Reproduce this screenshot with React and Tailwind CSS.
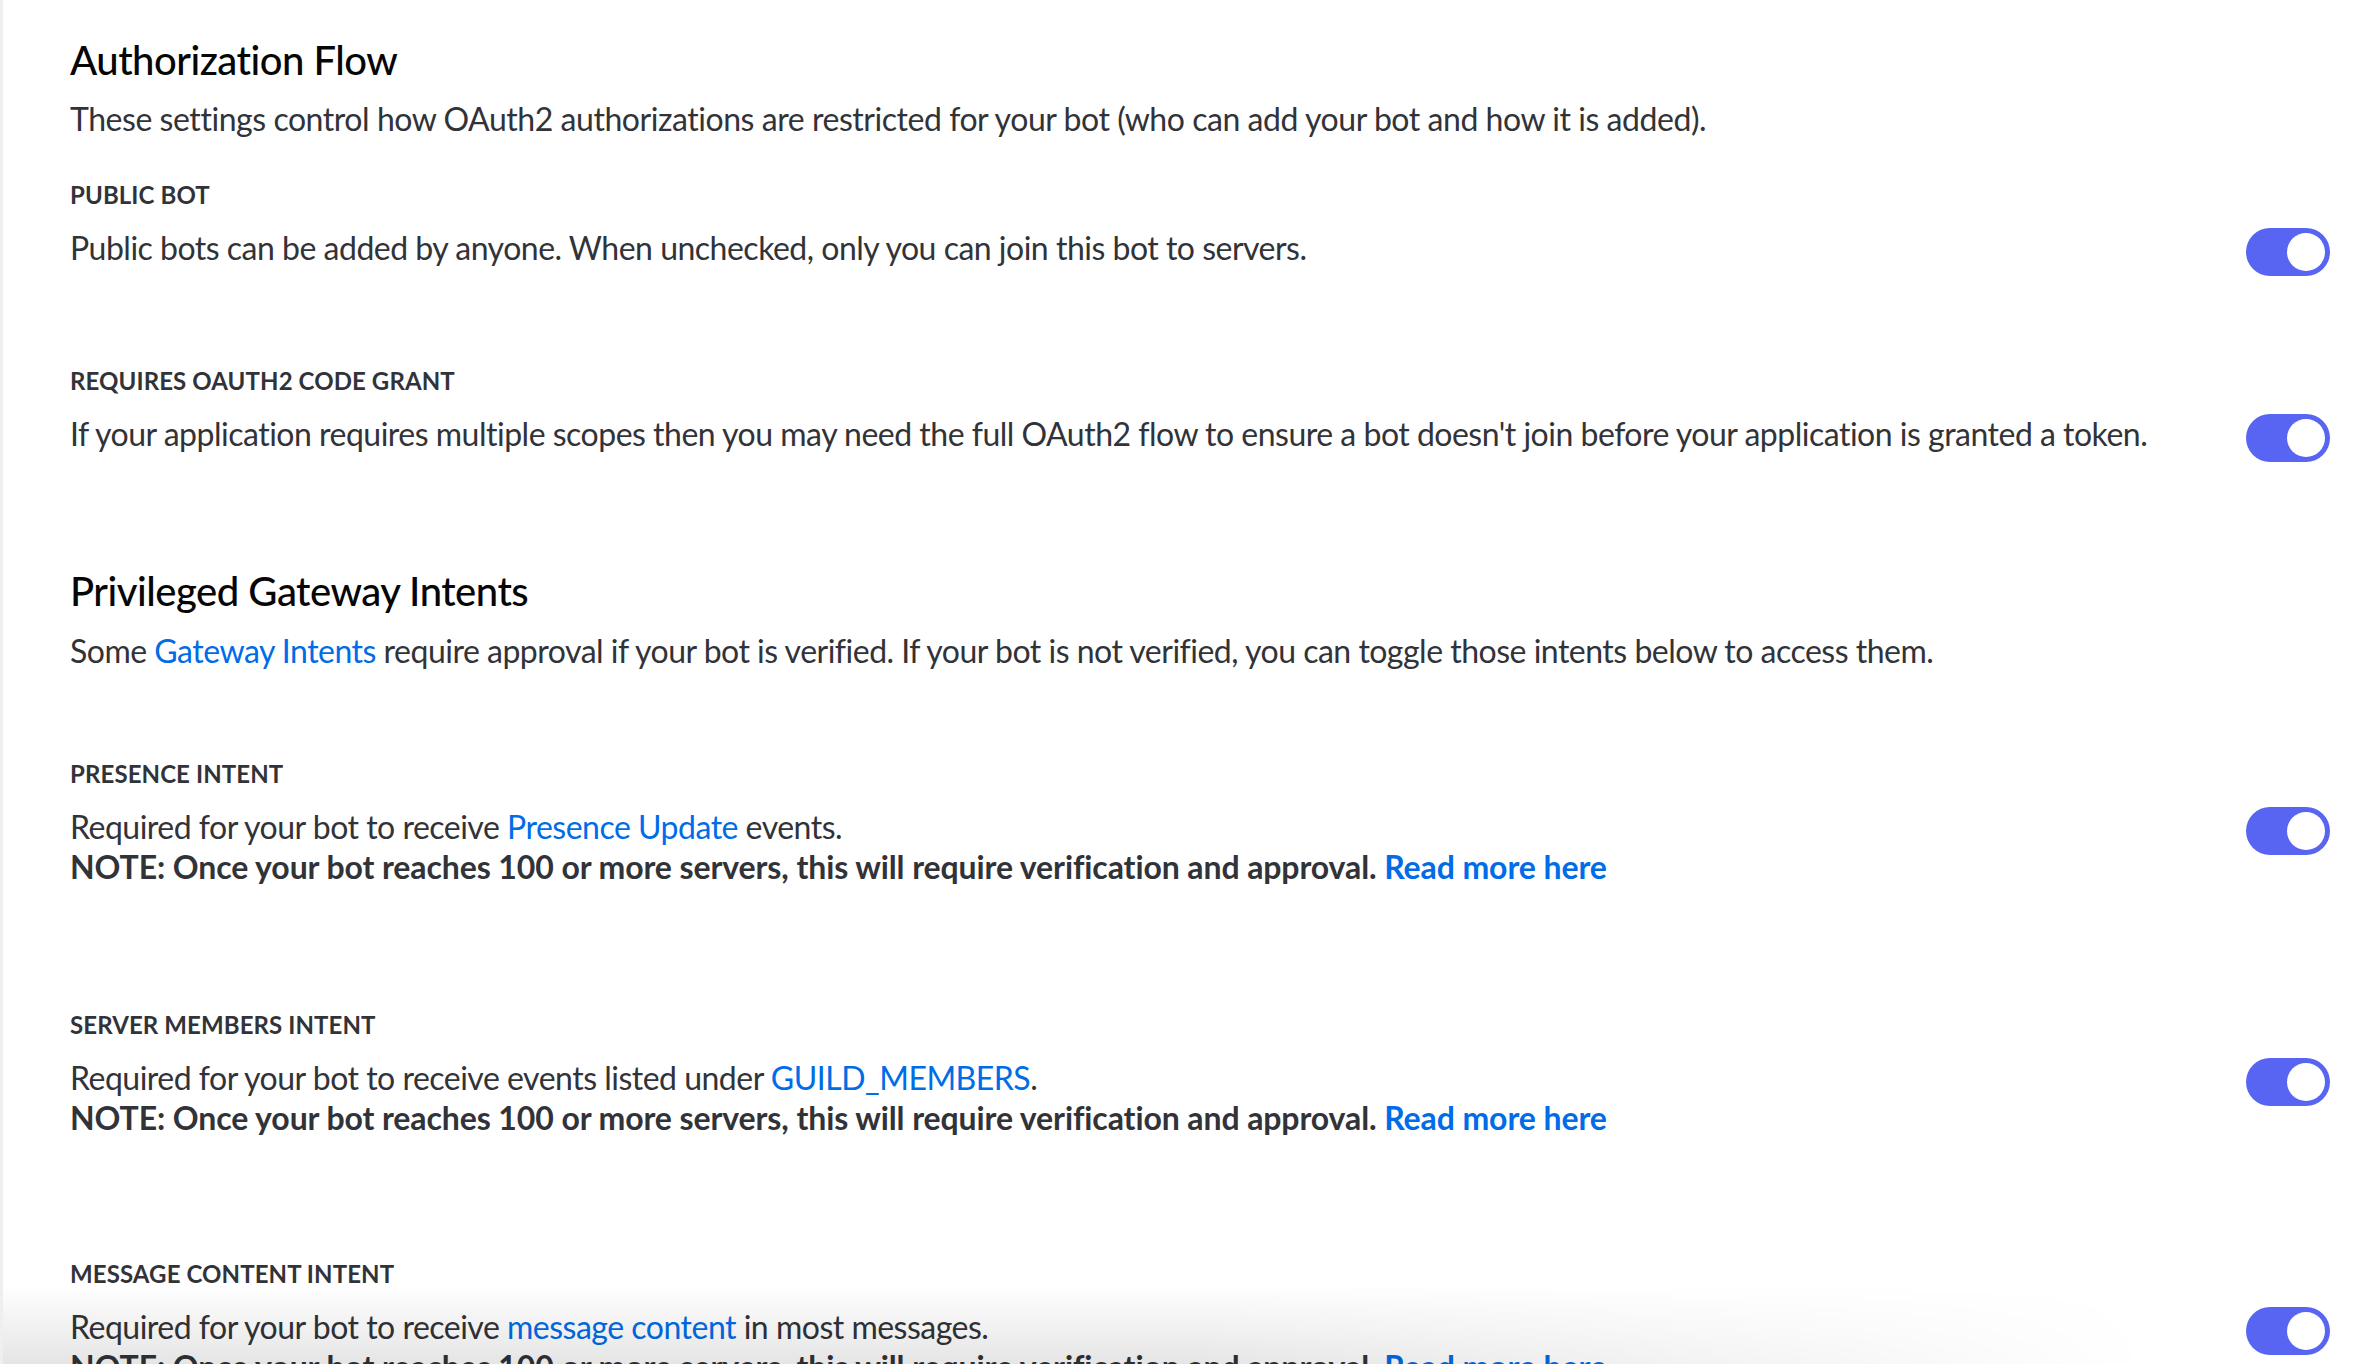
import React from "react";

const FONT = "font-['Lato','Liberation_Sans',Arial,sans-serif]";

function Toggle() {
  return (
    <div className="flex h-[48px] w-[84px] shrink-0 items-center justify-end rounded-full bg-[#5865f2] pr-[5px]">
      <div className="h-[38px] w-[38px] rounded-full bg-white" />
    </div>
  );
}

function Link({ children, bold }) {
  return (
    <a href="#" className={`text-[#006ce7] ${bold ? "font-bold" : ""}`}>
      {children}
    </a>
  );
}

function SettingRow({ label, className = "", children }) {
  return (
    <div className={className}>
      <div className="text-[24px] font-bold uppercase leading-[32px] tracking-[0.1px] text-[#313338]">
        {label}
      </div>
      <div className="mt-[17px] flex items-start justify-between gap-10">
        <div className="text-[32px] leading-[40px] tracking-[-0.5px] text-[#313338]">
          {children}
        </div>
        <Toggle />
      </div>
    </div>
  );
}

function Note() {
  return (
    <div className="font-bold tracking-[-0.1px]">
      NOTE: Once your bot reaches 100 or more servers, this will require verification
      and approval. <Link bold>Read more here</Link>
    </div>
  );
}

export default function App() {
  return (
    <div
      className={`relative h-[1364px] w-full overflow-hidden border-l-[3px] border-[#eeeff1] bg-white ${FONT}`}
    >
      <div className="pl-[67px] pr-[40px] pt-[36px]">
        <h2 className="text-[40px] font-medium leading-[48px] tracking-[-0.5px] text-[#060607]">
          Authorization Flow
        </h2>
        <p className="mt-[15px] text-[32px] leading-[40px] tracking-[-0.45px] text-[#313338]">
          These settings control how OAuth2 authorizations are restricted for your bot
          (who can add your bot and how it is added).
        </p>

        <SettingRow label="Public Bot" className="mt-[40px]">
          Public bots can be added by anyone. When unchecked, only you can join this bot
          to servers.
        </SettingRow>

        <SettingRow label="Requires OAuth2 Code Grant" className="mt-[89px]">
          If your application requires multiple scopes then you may need the full OAuth2
          flow to ensure a bot doesn't join before your application is granted a token.
        </SettingRow>

        <h2 className="mt-[105px] text-[40px] font-medium leading-[48px] tracking-[-0.5px] text-[#060607]">
          Privileged Gateway Intents
        </h2>
        <p className="mt-[16px] text-[32px] leading-[40px] tracking-[-0.5px] text-[#313338]">
          Some <Link>Gateway Intents</Link> require approval if your bot is verified. If
          your bot is not verified, you can toggle those intents below to access them.
        </p>

        <SettingRow label="Presence Intent" className="mt-[87px]">
          <div>
            Required for your bot to receive <Link>Presence Update</Link> events.
          </div>
          <Note />
        </SettingRow>

        <SettingRow label="Server Members Intent" className="mt-[122px]">
          <div>
            Required for your bot to receive events listed under{" "}
            <Link>GUILD_MEMBERS</Link>.
          </div>
          <Note />
        </SettingRow>

        <SettingRow label="Message Content Intent" className="mt-[120px]">
          <div>
            Required for your bot to receive <Link>message content</Link> in most
            messages.
          </div>
          <Note />
        </SettingRow>
      </div>

      <div className="pointer-events-none absolute bottom-0 left-0 h-[80px] w-[2150px] bg-[linear-gradient(to_top,rgba(0,0,0,0.1),rgba(0,0,0,0))] [mask-image:linear-gradient(to_right,black_55%,transparent)]" />
    </div>
  );
}
